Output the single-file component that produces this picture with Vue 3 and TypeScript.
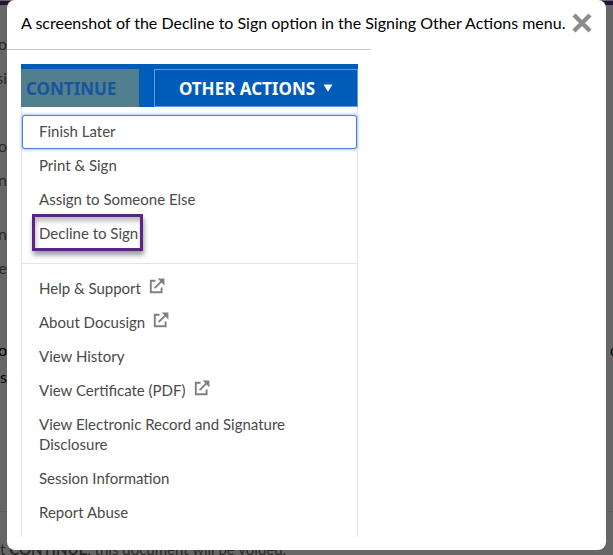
<script setup lang="ts">
interface MenuItem {
  label: string
  external?: boolean
  focused?: boolean
  marked?: boolean
}

const signingItems: MenuItem[] = [
  { label: 'Finish Later', focused: true },
  { label: 'Print & Sign' },
  { label: 'Assign to Someone Else' },
  { label: 'Decline to Sign', marked: true },
]

const supportItems: MenuItem[] = [
  { label: 'Help & Support', external: true },
  { label: 'About Docusign', external: true },
  { label: 'View History' },
  { label: 'View Certificate (PDF)', external: true },
  { label: 'View Electronic Record and Signature Disclosure' },
  { label: 'Session Information' },
  { label: 'Report Abuse' },
]
</script>

<template>
  <div class="page">
    <div class="page-bar"></div>
    <div class="page-body">
      <div class="page-column">
        <p>o</p>
        <p>si</p>
        <p class="gap-large">o</p>
        <p>n</p>
        <p class="gap-small">n</p>
        <p>e</p>
        <p class="strong gap-large">o</p>
        <p class="strong tight">s</p>
      </div>
      <div class="page-edge">c</div>
    </div>
    <p class="page-note">t <b>CONTINUE</b>, this document will be voided.</p>

    <div class="dialog" role="dialog" aria-labelledby="dialog-title">
      <header class="dialog-header">
        <h1 id="dialog-title">A screenshot of the Decline to Sign option in the Signing Other Actions menu.</h1>
        <button class="close" type="button" aria-label="Close">
          <svg viewBox="0 0 20 20" width="20" height="20" aria-hidden="true">
            <path d="M2 2 18 18M18 2 2 18" fill="none" stroke="#8c8c8c" stroke-width="4.4" />
          </svg>
        </button>
      </header>
      <div class="rule"></div>

      <div class="panel">
        <div class="toolbar">
          <button class="continue" type="button">CONTINUE</button>
          <button class="other" type="button">
            OTHER ACTIONS
            <svg viewBox="0 0 10 8" width="10" height="8" aria-hidden="true">
              <path d="M.6.5h8.8L5 7.8Z" fill="#fff" />
            </svg>
          </button>
        </div>
        <div class="menu">
          <ul>
            <li v-for="item in signingItems" :key="item.label">
              <button
                type="button"
                class="item"
                :class="{ focused: item.focused }"
              ><span :class="{ marked: item.marked }">{{ item.label }}</span></button>
            </li>
          </ul>
          <ul class="support">
            <li v-for="item in supportItems" :key="item.label">
              <button type="button" class="item">
                <span>{{ item.label }}</span>
                <svg
                  v-if="item.external"
                  class="external"
                  viewBox="0 0 16 16"
                  width="16"
                  height="16"
                  aria-hidden="true"
                >
                  <path
                    d="M6.5 2.8H1.8V14.2H12.6V9.6M5.6 10.2 13.4 2.4"
                    fill="none"
                    stroke="#808080"
                    stroke-width="1.9"
                  />
                  <path d="M8.6 .6H15.4V7.4L13.2 5.2 10.8 2.8Z" fill="#808080" />
                </svg>
              </button>
            </li>
          </ul>
        </div>
      </div>
    </div>
  </div>
</template>

<style>
body {
  background: #666;
}
</style>

<style scoped>
.page {
  position: relative;
  box-sizing: border-box;
  display: flex;
  flex-direction: column;
  height: 100vh;
  overflow: hidden;
  background: #666;
  color: #292929;
  font-family: Lato, sans-serif;
  font-size: 16px;
}

.page p {
  margin: 0;
}

.page-bar {
  flex: none;
  height: 4px;
  border-top: 1px solid #666;
  background: #25103a;
}

.page-body {
  display: flex;
  justify-content: space-between;
  height: 506px;
  flex: none;
  border-bottom: 1px solid #5c5c5c;
}

.page-column {
  width: 7px;
  padding-top: 22px;
}

.page-column p {
  display: flex;
  justify-content: flex-end;
  line-height: 34px;
}

.page-column .gap-large {
  margin-top: 34px;
}

.page-column .gap-small {
  margin-top: 20px;
}

.page-column .strong {
  color: #000;
}

.page-column .gap-large.strong {
  margin-top: 48px;
}

.page-column .tight {
  line-height: 20px;
}

.page-edge {
  width: 3px;
  padding-top: 335px;
  line-height: 20px;
  color: #000;
}

.page-note {
  flex: none;
  padding-top: 25px;
  font-size: 15px;
  line-height: 24px;
  white-space: nowrap;
}

.dialog {
  position: absolute;
  inset: 0 7px auto;
  box-sizing: border-box;
  padding: 0 14px 13px;
  border-radius: 8px;
  background: #fff;
}

.dialog-header {
  display: flex;
  align-items: center;
  justify-content: space-between;
  height: 46px;
}

h1 {
  margin: 0;
  color: #000;
  font-size: 16px;
  font-weight: 400;
  line-height: 24px;
  white-space: nowrap;
}

button {
  margin: 0;
  border: 0;
  border-radius: 0;
  background: none;
  font-family: inherit;
}

.close {
  display: flex;
  padding: 0;
}

.rule {
  width: 364px;
  height: 1px;
  margin: 3px 0 14px -14px;
  background: #ccc;
}

.panel {
  max-width: 337px;
}

.toolbar {
  display: flex;
  justify-content: space-between;
  height: 38px;
  padding-top: 5px;
  background: #005cb9;
}

.toolbar button {
  font-family: "Noto Sans", sans-serif;
  font-size: 17px;
  font-weight: 700;
  white-space: nowrap;
}

.continue {
  width: 118px;
  padding: 0 0 0 5px;
  background: #527f8d;
  color: #17559c;
  text-align: left;
}

.other {
  display: flex;
  align-items: center;
  justify-content: center;
  gap: 8px;
  width: 204px;
  padding: 0;
  border: 1px solid #5d98d8;
  color: #fff;
}

.menu {
  padding: 8px 0 7px;
  border: solid #e4e4e4;
  border-width: 0 1px;
}

ul {
  margin: 0;
  padding: 0;
  list-style: none;
}

.support {
  margin-top: 12px;
  padding-top: 8px;
  border-top: 1px solid #e4e4e4;
}

.item {
  display: flex;
  align-items: center;
  gap: 8px;
  width: 100%;
  padding: 6px 64px 8px 17px;
  color: #4a4a4a;
  font-size: 15px;
  line-height: 20px;
  text-align: left;
}

.focused {
  border-radius: 3px;
  box-shadow: inset 0 0 0 1px #4b7fda, 0 0 3px 1px #a9c8f5;
}

.marked {
  margin: -9px -5px -8px -7px;
  padding: 6px 2px 5px 4px;
  border: 3px solid #5c2483;
  box-shadow: 1px 4px 5px #0006, inset 1px 4px 5px #0004;
}

.external {
  flex: none;
  margin-bottom: 4px;
}
</style>
